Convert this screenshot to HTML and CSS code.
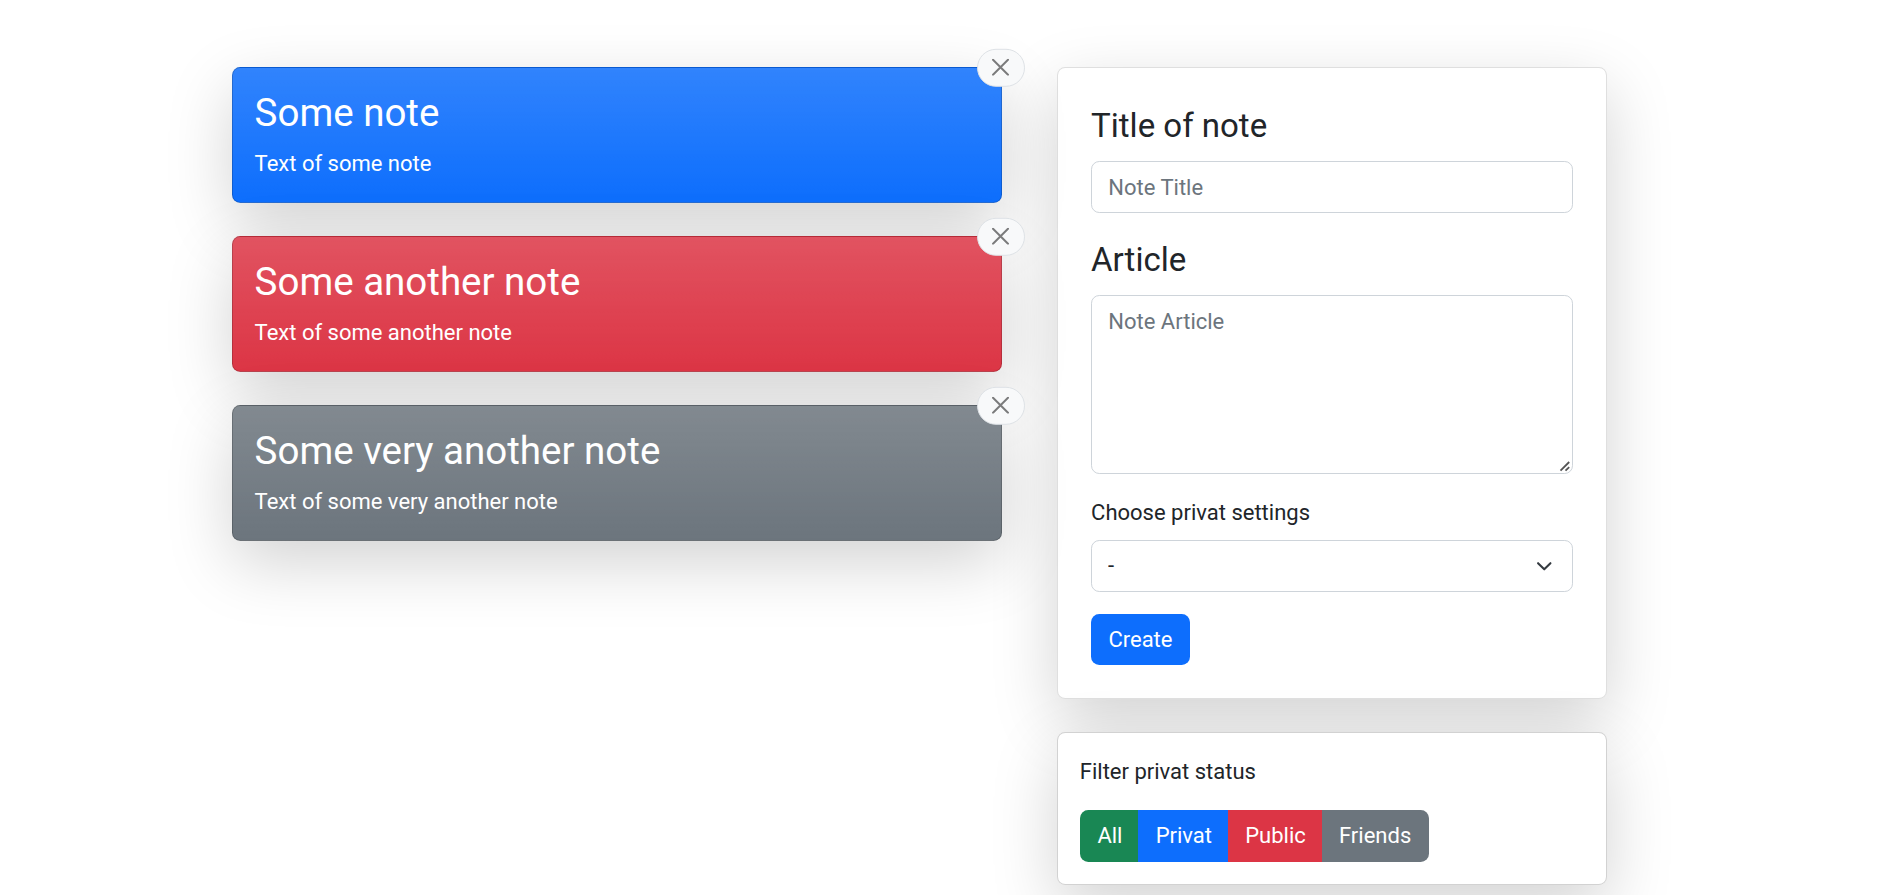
FILE: index.html
```html
<!DOCTYPE html>
<html lang="en">
<head>
<meta charset="utf-8">
<title>Notes</title>
<link rel="stylesheet" href="styles.css">
</head>
<body>
<svg class="sprite" width="0" height="0">
  <symbol id="close" viewBox="0 0 17 17"><path d="M1 1 16 16M16 1 1 16" fill="none" stroke="#000" stroke-width="2" stroke-linecap="round"/></symbol>
</svg>
<main class="layout">
  <aside class="sidebar">
    <form class="card form-card">
      <label class="label label-lg" for="title">Title of note</label>
      <input class="control" id="title" type="text" placeholder="Note Title">
      <label class="label label-lg" for="article">Article</label>
      <div class="article-wrap">
        <textarea class="control article" id="article" placeholder="Note Article"></textarea>
        <svg class="grip" viewBox="0 0 12 12"><path d="M1.5 10.7 10.2 2M6.5 10.7l3.7-3.5"/></svg>
      </div>
      <label class="label" for="privacy">Choose privat settings</label>
      <div class="select-wrap">
        <select class="control select" id="privacy"><option>-</option><option>Privat</option><option>Public</option><option>Friends</option></select>
        <svg class="chevron" viewBox="0 0 16 16"><path fill="none" stroke="#343a40" stroke-linecap="round" stroke-linejoin="round" stroke-width="2" d="m2 5 6 6 6-6"/></svg>
      </div>
      <button class="btn primary" type="button">Create</button>
    </form>
    <section class="card filter-card">
      <p class="filter-title">Filter privat status</p>
      <div class="btn-group">
        <button class="btn success" type="button">All</button>
        <button class="btn primary" type="button">Privat</button>
        <button class="btn danger" type="button">Public</button>
        <button class="btn secondary" type="button">Friends</button>
      </div>
    </section>
  </aside>
  <section class="notes">
    <article class="card note primary">
      <h3 class="note-title">Some note</h3>
      <p class="note-text">Text of some note</p>
      <span class="close"><svg class="close-icon"><use href="#close"/></svg></span>
    </article>
    <article class="card note danger">
      <h3 class="note-title">Some another note</h3>
      <p class="note-text">Text of some another note</p>
      <span class="close"><svg class="close-icon"><use href="#close"/></svg></span>
    </article>
    <article class="card note secondary">
      <h3 class="note-title">Some very another note</h3>
      <p class="note-text">Text of some very another note</p>
      <span class="close"><svg class="close-icon"><use href="#close"/></svg></span>
    </article>
  </section>
</main>
</body>
</html>
```

FILE: styles.css
```css
* { box-sizing: border-box; }
html { font-size: 22px; }
body {
  margin: 0;
  height: 895px;
  overflow: hidden;
  background: #fff;
  color: #212529;
  font: 400 1rem/1.5 Roboto, "Liberation Sans", sans-serif;
}
.sprite { position: absolute; }
.layout {
  display: flex;
  align-items: flex-start;
  gap: 55.5px;
  padding: 66.6px 0 0 231.6px;
}
.notes, .sidebar { display: flex; flex-direction: column; gap: 33px; }
.notes { width: 770px; }
.sidebar { order: 2; width: 550px; }

.card {
  position: relative;
  background-color: #fff;
  border: 1px solid rgba(0, 0, 0, .175);
  border-radius: .375rem;
  box-shadow: 0 1rem 3rem rgba(0, 0, 0, .175);
}
.primary { background-color: #0d6efd; }
.success { background-color: #198754; }
.danger { background-color: #dc3545; }
.secondary { background-color: #6c757d; }

.note {
  height: 136px;
  padding: 1rem;
  color: #fff;
  background-image: linear-gradient(180deg, rgba(255, 255, 255, .15), rgba(255, 255, 255, 0));
}
.note-title { margin: 0 0 .5rem; font-size: 1.75rem; font-weight: 400; line-height: 1.2; }
.note-text { margin: 0; }
.close {
  position: absolute;
  top: 0;
  left: 100%;
  transform: translate(-50%, -50%);
  display: flex;
  padding: 9.9px 14.4px 9.5px 14.6px;
  background: #f8f9fa;
  border: 1px solid #dee2e6;
  border-radius: 50rem;
}
.close-icon { width: 17px; height: 17px; opacity: .5; }

.form-card { padding: 33px; border-color: rgba(0, 0, 0, .125); }
.label { display: block; width: max-content; margin-bottom: 11px; }
.label-lg { font-size: 33px; }
.control {
  display: block;
  width: 100%;
  height: 51.5px;
  margin: 0 0 22px;
  padding: 8.9px 16.2px 7.6px;
  color: #212529;
  background: #fff;
  border: 1px solid #ced4da;
  border-radius: .375rem;
  font: inherit;
  appearance: none;
}
.control::placeholder { color: #6c757d; opacity: 1; }
.select { padding: 8.25px 16px; }
.article-wrap, .select-wrap { position: relative; }
.article { height: 179px; resize: none; }
.grip {
  position: absolute;
  right: 2px;
  bottom: 2px;
  width: 12px;
  height: 12px;
  fill: none;
  stroke: #555;
  stroke-width: 1.8;
}
.chevron { position: absolute; top: 18px; right: 21px; width: 16.5px; height: 16.5px; }
.btn {
  display: block;
  margin: 0;
  padding: 8.25px 16.3px;
  color: #fff;
  border: 1px solid transparent;
  border-radius: .375rem;
  font: inherit;
}

.filter-card { padding: 22px; }
.filter-title { margin: 0 0 22px -.3px; }
.btn-group { display: flex; }
.btn-group .btn { border-radius: 0; }
.btn-group .btn + .btn { margin-left: -1.4px; }
.btn-group .btn:first-child { border-radius: .375rem 0 0 .375rem; }
.btn-group .btn:last-child { border-radius: 0 .375rem .375rem 0; }
```
